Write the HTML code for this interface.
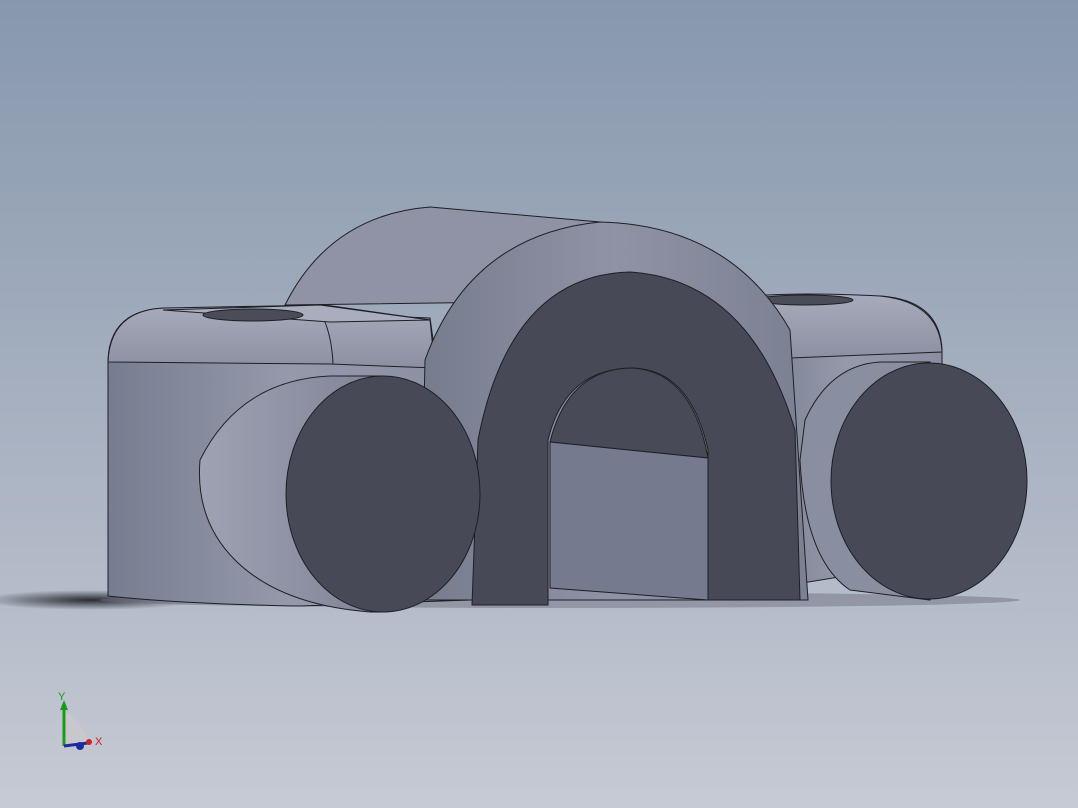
<!DOCTYPE html>
<html><head><style>
html,body{margin:0;padding:0;width:1078px;height:808px;overflow:hidden}
svg{display:block}
</style></head><body>
<svg width="1078" height="808" viewBox="0 0 1078 808" xmlns="http://www.w3.org/2000/svg">
<defs>
<linearGradient id="bg" x1="0" y1="0" x2="0" y2="1">
<stop offset="0" stop-color="#8798ad"/><stop offset="0.5" stop-color="#a6b0c0"/><stop offset="1" stop-color="#c6cad4"/>
</linearGradient>
<linearGradient id="lf" x1="0" y1="0" x2="1" y2="0">
<stop offset="0" stop-color="#787c90"/><stop offset="0.5" stop-color="#9599ab"/><stop offset="1" stop-color="#8a8ea1"/>
</linearGradient>
<linearGradient id="cap" x1="0" y1="0" x2="0" y2="1">
<stop offset="0" stop-color="#a7abbb"/><stop offset="1" stop-color="#8c90a2"/>
</linearGradient>
<linearGradient id="rim" x1="0" y1="0" x2="1" y2="0">
<stop offset="0" stop-color="#777b8e"/><stop offset="0.5" stop-color="#8f93a5"/><stop offset="1" stop-color="#7b7f92"/>
</linearGradient>
<linearGradient id="cylL" x1="0" y1="0" x2="1" y2="0">
<stop offset="0" stop-color="#9ea2b3"/><stop offset="1" stop-color="#7f8396"/>
</linearGradient>
<radialGradient id="sh" cx="0.5" cy="0.5" r="0.5">
<stop offset="0" stop-color="#2a2c33"/><stop offset="1" stop-color="#2a2c33" stop-opacity="0"/>
</radialGradient>
</defs>
<rect width="1078" height="808" fill="url(#bg)"/>
<ellipse cx="90" cy="600" rx="110" ry="10" fill="url(#sh)"/>
<ellipse cx="560" cy="600" rx="460" ry="8" fill="#6d7080" opacity="0.5"/>
<g stroke="#1e1f25" stroke-width="1">
<path d="M285 305 Q330 215 430 207 L600 222 L660 300 Z" fill="#8f93a5"/>
<path d="M750 296 L880 296 Q940 300 942 350 L942 560 L760 590 Z" fill="url(#lf)"/>
<path d="M752 296 Q800 292 880 296 Q940 302 942 352 L790 358 Z" fill="url(#cap)"/>
<ellipse cx="805" cy="300" rx="48" ry="5" fill="#4a4d58"/>
<path d="M108 360 Q110 310 165 308 L430 318 L470 600 L300 606 Q180 604 108 596 Z" fill="url(#lf)"/>
<path d="M108 362 Q110 310 165 308 L325 305 L430 320 L435 368 L330 364 Z" fill="url(#cap)"/>
<path d="M163 310 L320 305 L430 320 L330 322 Z" fill="#a9adbd"/>
<ellipse cx="253" cy="315" rx="50" ry="6" fill="#4a4d58"/>
<path d="M325 322 Q332 340 333 364" fill="none"/>
<path d="M420 600 L425 360 Q470 235 600 222 Q730 225 790 330 L808 600 Z" fill="url(#rim)"/>
<path d="M472 605 L478 440 Q510 275 630 272 Q750 280 795 430 L800 600 L708 600 L708 450 Q690 368 630 368 Q565 370 548 440 L548 605 Z" fill="#474a56"/>
<path d="M550 442 Q568 370 630 368 Q692 370 708 458 Z" fill="#484b57"/>
<path d="M550 442 L708 458 L708 600 L550 588 Z" fill="#767a8e"/>
<path d="M330 376 Q240 380 200 460 Q195 520 235 560 Q280 605 370 612 L383 612 L383 376 Z" fill="url(#cylL)"/>
<ellipse cx="383" cy="494" rx="97" ry="118" fill="#474a56"/>
<path d="M880 362 Q830 365 805 420 L800 460 Q805 560 850 590 L930 600 L930 362 Z" fill="#8a8ea1"/>
<ellipse cx="929" cy="481" rx="98" ry="118" fill="#474a56"/>
</g>
<g>
<path d="M64 712 L64 746 L88 746 Q86 722 64 712Z" fill="#c8c8cc"/>
<line x1="64" y1="746" x2="64" y2="706" stroke="#1a9a1a" stroke-width="3"/>
<path d="M60 710 L64 700 L68 710Z" fill="#1a9a1a"/>
<line x1="64" y1="746" x2="88" y2="743" stroke="#1a2aa0" stroke-width="3"/>
<circle cx="80" cy="746" r="4" fill="#1a2aa0"/>
<circle cx="89" cy="742" r="3" fill="#d02020"/>
<text x="58" y="700" font-family="Liberation Sans, sans-serif" font-size="11" fill="#1a9a1a">Y</text>
<text x="95" y="745" font-family="Liberation Sans, sans-serif" font-size="11" fill="#d02020">X</text>
</g>
</svg>
</body></html>
